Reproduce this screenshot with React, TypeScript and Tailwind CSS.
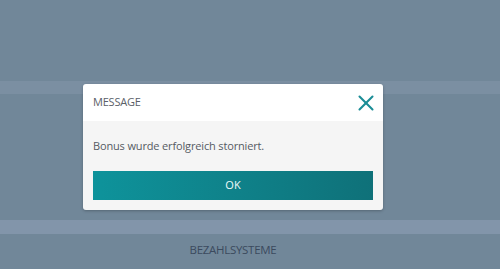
import { X } from "lucide-react";

export default function App() {
  return (
    <div
      className="relative w-[500px] h-[269px] overflow-hidden bg-[#718799]"
      style={{ fontFamily: "'Open Sans', 'Liberation Sans', sans-serif" }}
    >
      <div className="flex flex-col">
        <div className="h-[81px]" />
        <div className="h-[13px] bg-[#7b8fa2]" />
        <div className="h-[126px]" />
        <div className="h-[14px] bg-[#8295aa]" />
        <div className="flex justify-center pt-[7px] pr-[34px]">
          <span className="text-[11.5px] text-[#3b4a5e] tracking-[-0.3px]">BEZAHLSYSTEME</span>
        </div>
      </div>

      {/* modal */}
      <div className="absolute left-[83px] top-[84px] w-[300px] rounded-[3px] overflow-hidden shadow-[0_1px_3px_rgba(0,0,0,0.25)]">
        <div className="h-[37px] bg-white flex items-center justify-between pl-[10px] pr-[4px]">
          <span className="text-[11px] text-[#5a6068] tracking-[-0.2px]">MESSAGE</span>
          <X className="w-[26px] h-[26px] text-[#1b8d96]" strokeWidth={1.9} />
        </div>
        <div className="bg-[#f5f5f5] px-[10px] pt-[16px] pb-[10px]">
          <p className="text-[11px] text-[#555b63] leading-[18px] tracking-[-0.15px]">
            Bonus wurde erfolgreich storniert.
          </p>
          <button className="mt-[16px] w-[280px] h-[29px] bg-gradient-to-r from-[#0e939b] to-[#0f7179] text-[#eefafa] text-[11px] font-medium flex items-center justify-center">
            OK
          </button>
        </div>
      </div>
    </div>
  );
}
